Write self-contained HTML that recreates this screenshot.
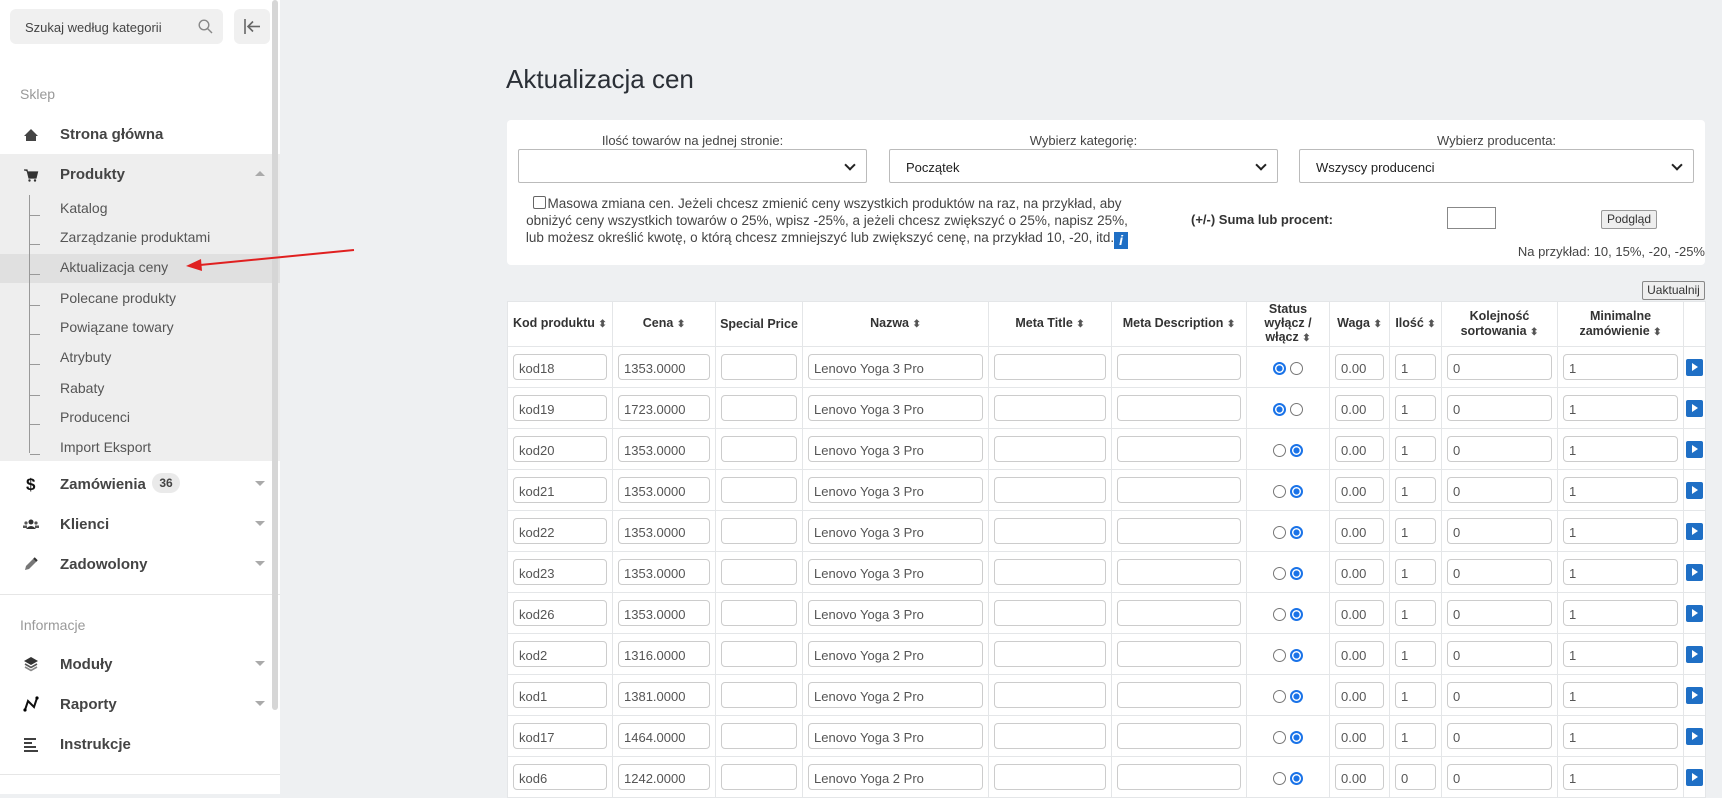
<!DOCTYPE html>
<html><head><meta charset="utf-8"><style>
*{box-sizing:border-box;margin:0;padding:0}
body{width:1722px;height:794px;overflow:hidden;background:#eef0f2;font-family:"Liberation Sans",sans-serif;position:relative;color:#333}
#sb{position:absolute;left:0;top:0;width:280px;height:794px;background:#fff}
.abs{position:absolute}
.search{left:10px;top:9px;width:213px;height:35px;background:#f0f0f0;border-radius:6px;font-size:13px;color:#444;padding:11px 15px}
.coll{left:234px;top:9px;width:36px;height:35px;background:#f0f0f0;border-radius:6px}
.sec{left:20px;font-size:14px;color:#999}
.mi{left:60px;font-size:15px;color:#444;font-weight:bold}
.si{left:60px;font-size:14px;color:#555}
.ic{left:22px;width:18px;height:18px}
.caret{left:255px;width:0;height:0;border-left:5px solid transparent;border-right:5px solid transparent;border-top:5px solid #aaa}
h1{position:absolute;left:506px;top:64px;font-size:26px;font-weight:normal;color:#2a2f36}
#card{position:absolute;left:507px;top:120px;width:1198px;height:145px;background:#fff;border-radius:4px}
.lbl{font-size:13px;color:#444;text-align:center}
.sel{height:34px;border:1px solid #bbb;border-radius:2px;background:#fff;font-size:13px;padding:10px 16px;color:#222}
.sel:after{content:"";position:absolute;right:12px;top:11px;width:6px;height:6px;border-right:2px solid #222;border-bottom:2px solid #222;transform:rotate(45deg)}
table{position:absolute;left:507px;top:301px;width:1198px;border-collapse:collapse;table-layout:fixed;background:#fff}
td,th{border:1px solid #e4e6e8;font-size:13px;height:41px;padding:0 5px;vertical-align:middle}
th{height:44px;font-weight:bold;color:#333;text-align:center;line-height:15px;font-size:12.5px;padding:0 3px}
.nw{white-space:nowrap}
.in{height:26px;border:1px solid #ccc;border-radius:4px;padding:6px 5px;color:#555;font-size:13px;background:#fff}
.srt{font-size:10px;color:#555}
.rad{display:inline-block;width:13px;height:13px;border-radius:50%;border:1px solid #777;vertical-align:middle;margin:0 2px}
.rad.on{border:2px solid #1a73e8;background:radial-gradient(#1a73e8 45%,#fff 50%)}
.pl{width:17px;height:17px;background:#1f6fc5;border-radius:2px;position:relative;margin:auto}
.pl:after{content:"";position:absolute;left:6px;top:4px;border-top:4.5px solid transparent;border-bottom:4.5px solid transparent;border-left:6px solid #fff}
</style></head><body>
<div id="sb">
<div class="abs search">Szukaj według kategorii
<svg class="abs" style="left:188px;top:10px" width="15" height="15" viewBox="0 0 15 15"><circle cx="6" cy="6" r="4.8" fill="none" stroke="#888" stroke-width="1.4"/><line x1="9.5" y1="9.5" x2="14" y2="14" stroke="#888" stroke-width="1.4"/></svg></div>
<div class="abs coll"><svg class="abs" style="left:9px;top:9px" width="18" height="17" viewBox="0 0 18 17"><line x1="2" y1="1" x2="2" y2="16" stroke="#666" stroke-width="1.6"/><line x1="5" y1="8.5" x2="17" y2="8.5" stroke="#666" stroke-width="1.6"/><polyline points="10,3.5 5,8.5 10,13.5" fill="none" stroke="#666" stroke-width="1.6"/></svg></div>
<div class="abs sec" style="top:86px">Sklep</div>
<svg class="abs ic" style="top:126px" viewBox="0 0 18 18"><path d="M9 3 L16 10 L14 10 L14 15 L4 15 L4 10 L2 10Z" fill="#444"/></svg>
<div class="abs mi" style="top:126px">Strona główna</div>
<div class="abs" style="left:0;top:154px;width:280px;height:307px;background:#eeeeee"></div>
<div class="abs" style="left:0;top:254px;width:280px;height:29px;background:#e0e0e0"></div>
<svg class="abs ic" style="top:166px" viewBox="0 0 18 18"><path d="M2 4 H5 L7 12 H14 L15.5 6 H6" fill="#333" stroke="#333" stroke-width="1.2"/><circle cx="7.5" cy="14.5" r="1.2" fill="#333"/><circle cx="13" cy="14.5" r="1.2" fill="#333"/></svg>
<div class="abs mi" style="top:166px">Produkty</div>
<div class="abs" style="left:255px;top:171px;width:0;height:0;border-left:5px solid transparent;border-right:5px solid transparent;border-bottom:5px solid #aaa"></div>
<div class="abs" style="left:29px;top:195px;width:1px;height:258px;background:#999"></div>
<div id="subs"></div>
<svg class="abs ic" style="top:475px" viewBox="0 0 18 18"><text x="4" y="15" font-size="17" font-weight="bold" font-family="Liberation Sans" fill="#111">$</text></svg>
<div class="abs mi" style="top:476px">Zamówienia</div>
<div class="abs" style="left:152px;top:473px;width:28px;height:20px;border-radius:10px;background:#eaeaea;font-size:12px;font-weight:bold;text-align:center;line-height:20px;color:#444">36</div>
<div class="abs caret" style="left:255px;top:481px"></div>
<svg class="abs ic" style="top:515px" viewBox="0 0 18 18"><circle cx="9" cy="7" r="2.5" fill="#333"/><path d="M4 14 Q9 8 14 14Z" fill="#333"/><circle cx="4" cy="8" r="1.6" fill="#555"/><circle cx="14" cy="8" r="1.6" fill="#555"/><rect x="1" y="10.5" width="4" height="2.5" fill="#555"/><rect x="13" y="10.5" width="4" height="2.5" fill="#555"/></svg>
<div class="abs mi" style="top:516px">Klienci</div>
<div class="abs caret" style="left:255px;top:521px"></div>
<svg class="abs ic" style="top:555px" viewBox="0 0 18 18"><path d="M3 15 L4 11 L12 3 L15 6 L7 14Z" fill="#777"/><path d="M12 3 L15 6" stroke="#333" stroke-width="2"/></svg>
<div class="abs mi" style="top:556px">Zadowolony</div>
<div class="abs caret" style="left:255px;top:561px"></div>
<div class="abs" style="left:0;top:594px;width:280px;height:1px;background:#e6e6e6"></div>
<div class="abs sec" style="top:617px">Informacje</div>
<svg class="abs ic" style="top:655px" viewBox="0 0 18 18"><path d="M9 2 L16 6 L9 10 L2 6Z" fill="#333"/><path d="M3 9 L9 12.5 L15 9" fill="none" stroke="#555" stroke-width="1.6"/><path d="M3 12 L9 15.5 L15 12" fill="none" stroke="#888" stroke-width="1.6"/></svg>
<div class="abs mi" style="top:656px">Moduły</div>
<div class="abs caret" style="left:255px;top:661px"></div>
<svg class="abs ic" style="top:695px" viewBox="0 0 18 18"><polyline points="3,15 6,6 12,12 15,3" fill="none" stroke="#111" stroke-width="2"/><circle cx="3" cy="15" r="1.6"/><circle cx="15" cy="3" r="1.6"/></svg>
<div class="abs mi" style="top:696px">Raporty</div>
<div class="abs caret" style="left:255px;top:701px"></div>
<svg class="abs ic" style="top:735px" viewBox="0 0 18 18"><g stroke="#111" stroke-width="1.6"><line x1="2" y1="4" x2="14" y2="4"/><line x1="2" y1="8" x2="10" y2="8"/><line x1="2" y1="12" x2="14" y2="12"/><line x1="2" y1="16" x2="16" y2="16"/></g></svg>
<div class="abs mi" style="top:736px">Instrukcje</div>
<div class="abs" style="left:0;top:774px;width:280px;height:1px;background:#e6e6e6"></div>
<div class="abs" style="left:272px;top:0;width:6px;height:710px;background:#d6d6d6;border-radius:3px"></div>
</div>
<svg class="abs" style="left:0;top:0" width="400" height="300"><line x1="354" y1="250" x2="200" y2="265" stroke="#e02020" stroke-width="2"/><polygon points="186,266 201,259 202,271" fill="#e02020"/></svg>

<h1>Aktualizacja cen</h1>
<div id="card">
<div class="abs lbl" style="left:11px;top:13px;width:349px">Ilość towarów na jednej stronie:</div>
<div class="abs lbl" style="left:382px;top:13px;width:389px">Wybierz kategorię:</div>
<div class="abs lbl" style="left:792px;top:13px;width:395px">Wybierz producenta:</div>
<div class="abs sel" style="left:11px;top:29px;width:349px"></div>
<div class="abs sel" style="left:382px;top:29px;width:389px">Początek</div>
<div class="abs sel" style="left:792px;top:29px;width:395px">Wszyscy producenci</div>
<div class="abs" style="left:18px;top:75px;width:604px;font-size:13.5px;line-height:17px;color:#444;text-align:center">
<span style="display:inline-block;width:13px;height:13px;border:1px solid #666;border-radius:2px;vertical-align:-1px;margin-right:2px"></span>Masowa zmiana cen. Jeżeli chcesz zmienić ceny wszystkich produktów na raz, na przykład, aby obniżyć ceny wszystkich towarów o 25%, wpisz -25%, a jeżeli chcesz zwiększyć o 25%, napisz 25%, lub możesz określić kwotę, o którą chcesz zmniejszyć lub zwiększyć cenę, na przykład 10, -20, itd.<span style="display:inline-block;width:14px;height:17px;background:#1f6fc5;color:#fff;font-style:italic;font-weight:bold;font-size:14px;line-height:17px;vertical-align:-3px">i</span></div>
<div class="abs" style="left:684px;top:92px;font-size:13px;font-weight:bold;color:#333">(+/-) Suma lub procent:</div>
<div class="abs" style="left:940px;top:87px;width:49px;height:22px;border:1px solid #888;background:#fff"></div>
<div class="abs" style="left:1094px;top:90px;width:56px;height:19px;border:1px solid #999;border-radius:2px;background:#eee;font-size:12px;text-align:center;line-height:17px">Podgląd</div>
<div class="abs" style="right:0;top:124px;font-size:13px;color:#444">Na przykład: 10, 15%, -20, -25%</div>
</div>
<div class="abs" style="left:1642px;top:281px;width:63px;height:19px;border:1px solid #888;border-radius:2px;background:#eee;font-size:12px;text-align:center;line-height:17px">Uaktualnij</div>
<table id="t">
<colgroup><col style="width:105px"><col style="width:103px"><col style="width:87px"><col style="width:186px"><col style="width:123px"><col style="width:135px"><col style="width:83px"><col style="width:60px"><col style="width:52px"><col style="width:116px"><col style="width:126px"><col style="width:22px"></colgroup>
<tr><th class="nw" style="text-align:left;padding-left:5px">Kod produktu <span class="srt">⬍</span></th><th class="nw">Cena <span class="srt">⬍</span></th><th class="nw">Special Price</th><th class="nw">Nazwa <span class="srt">⬍</span></th><th class="nw">Meta Title <span class="srt">⬍</span></th><th class="nw">Meta Description <span class="srt">⬍</span></th><th style="line-height:14px">Status wyłącz / włącz <span class="srt">⬍</span></th><th class="nw">Waga <span class="srt">⬍</span></th><th class="nw" style="padding:0 2px">Ilość <span class="srt">⬍</span></th><th>Kolejność sortowania <span class="srt">⬍</span></th><th>Minimalne zamówienie <span class="srt">⬍</span></th><th></th></tr>
</table>
<script>
var sub=[["Katalog",209],["Zarządzanie produktami",238],["Aktualizacja ceny",268],["Polecane produkty",299],["Powiązane towary",328],["Atrybuty",358],["Rabaty",389],["Producenci",418],["Import Eksport",448]];
var h='';sub.forEach(function(s){h+='<div class="abs si" style="top:'+(s[1]-9)+'px">'+s[0]+'</div><div class="abs" style="left:30px;top:'+(s[1]+6)+'px;width:10px;height:1px;background:#999"></div>';});
document.getElementById('subs').innerHTML=h;
var d=[["kod18","1353","3",1,1],["kod19","1723","3",1,1],["kod20","1353","3",0,1],["kod21","1353","3",0,1],["kod22","1353","3",0,1],["kod23","1353","3",0,1],["kod26","1353","3",0,1],["kod2","1316","2",0,1],["kod1","1381","2",0,1],["kod17","1464","3",0,1],["kod6","1242","2",0,0]];
var t=document.getElementById('t');var r='';
function i(v){return '<div class="in">'+(v||'&nbsp;')+'</div>'}
d.forEach(function(x){r+='<tr><td>'+i(x[0])+'</td><td>'+i(x[1]+'.0000')+'</td><td>'+i('')+'</td><td>'+i('Lenovo Yoga '+x[2]+' Pro')+'</td><td>'+i('')+'</td><td>'+i('')+'</td><td style="text-align:center"><span class="rad'+(x[3]?' on':'')+'"></span><span class="rad'+(x[3]?'':' on')+'"></span></td><td>'+i('0.00')+'</td><td>'+i(String(x[4]))+'</td><td>'+i('0')+'</td><td>'+i('1')+'</td><td style="padding:0"><div class="pl"></div></td></tr>';});
t.insertAdjacentHTML('beforeend',r);
</script>
</body></html>
